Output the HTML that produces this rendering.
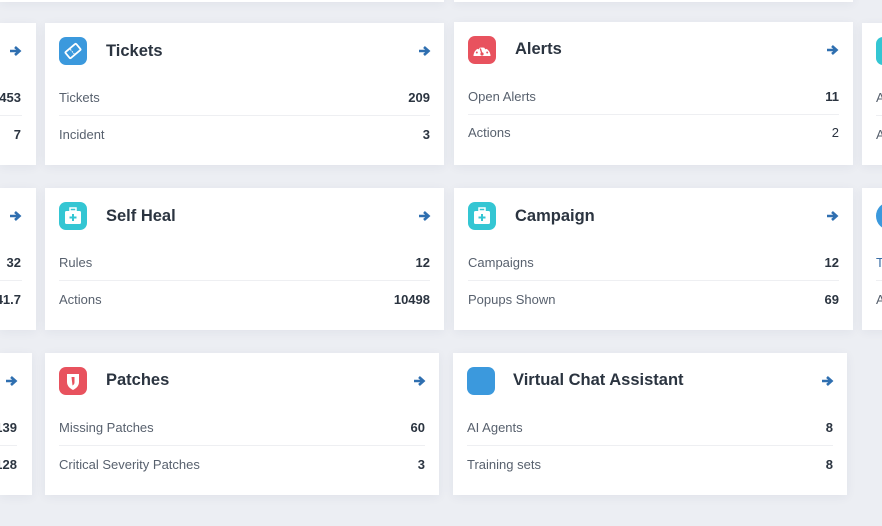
<!DOCTYPE html>
<html><head><style>
body{margin:0;width:882px;height:526px;background:#eceef3;position:relative;overflow:hidden;font-family:"Liberation Sans",sans-serif;}
.c{position:absolute;background:#fff;box-shadow:0 2px 10px rgba(40,50,80,.06);}
.ic{position:absolute;width:28px;height:28px;border-radius:7px;}
.t{position:absolute;font-size:16.5px;color:#2b3440;font-weight:600;}
.l{position:absolute;font-size:13px;color:#58616e;}
.v{position:absolute;font-size:13px;color:#2b3440;text-align:right;font-weight:600;}
.d{position:absolute;height:1px;background:#eeeff2;}
</style></head><body>
<div class="c" style="left:0;top:-10px;width:444px;height:12px"></div>
<div class="c" style="left:454px;top:-10px;width:399px;height:12px"></div>

<div class="c" style="left:0;top:23px;width:36px;height:142px">
<svg style="position:absolute;left:9px;top:22px" width="13" height="12" viewBox="0 0 13 12"><path d="M1 6H10M6 2L10.5 6L6 10" stroke="#2f6fb0" stroke-width="2.6" fill="none"/></svg>
<div class="v" style="right:15px;top:67px">453</div><div class="d" style="left:0;width:22px;top:92px"></div><div class="v" style="right:15px;top:104px">7</div></div>
<div class="c" style="left:0;top:188px;width:36px;height:142px">
<svg style="position:absolute;left:9px;top:22px" width="13" height="12" viewBox="0 0 13 12"><path d="M1 6H10M6 2L10.5 6L6 10" stroke="#2f6fb0" stroke-width="2.6" fill="none"/></svg>
<div class="v" style="right:15px;top:67px">32</div><div class="d" style="left:0;width:22px;top:92px"></div><div class="v" style="right:15px;top:104px">41.7</div></div>
<div class="c" style="left:0;top:353px;width:32px;height:142px">
<svg style="position:absolute;left:5px;top:22px" width="13" height="12" viewBox="0 0 13 12"><path d="M1 6H10M6 2L10.5 6L6 10" stroke="#2f6fb0" stroke-width="2.6" fill="none"/></svg>
<div class="v" style="right:15px;top:67px">139</div><div class="d" style="left:0;width:17px;top:92px"></div><div class="v" style="right:15px;top:104px">128</div></div>

<div class="c" style="left:862px;top:23px;width:30px;height:142px">
<div class="ic" style="left:14px;top:14px;background:#34c6d3"></div>
<div class="l" style="left:14px;top:67px">A</div><div class="d" style="left:14px;width:20px;top:92px"></div><div class="l" style="left:14px;top:104px">A</div></div>
<div class="c" style="left:862px;top:188px;width:30px;height:142px">
<div class="ic" style="left:14px;top:14px;background:#3b99dd;border-radius:14px"></div>
<div class="l" style="left:14px;top:67px;color:#3b6fa6">T</div><div class="d" style="left:14px;width:20px;top:92px"></div><div class="l" style="left:14px;top:104px">A</div></div>

<div class="c" style="left:45px;top:23px;width:399px;height:142px">
<div class="ic" style="left:14px;top:14px;background:#3b99dd"><svg width="28" height="28" viewBox="0 0 28 28"><g transform="rotate(-40 14 14)"><rect x="7" y="10" width="14" height="8" rx="1" fill="none" stroke="#fff" stroke-width="1.8"/><line x1="13" y1="11" x2="13" y2="17" stroke="#fff" stroke-width="1" stroke-dasharray="1.5 1"/></g></svg></div>
<div class="t" style="left:61px;top:19px">Tickets</div>
<svg style="position:absolute;left:373px;top:22px" width="13" height="12" viewBox="0 0 13 12"><path d="M1 6H10M6 2L10.5 6L6 10" stroke="#2f6fb0" stroke-width="2.6" fill="none"/></svg>
<div class="l" style="left:14px;top:67px">Tickets</div><div class="v" style="right:14px;top:67px">209</div>
<div class="d" style="left:14px;right:14px;top:92px"></div>
<div class="l" style="left:14px;top:104px">Incident</div><div class="v" style="right:14px;top:104px">3</div></div>

<div class="c" style="left:454px;top:22px;width:399px;height:143px">
<div class="ic" style="left:14px;top:14px;background:#e8525e"><svg width="28" height="28" viewBox="0 0 28 28"><path d="M5.5 20A8.5 8.5 0 1 1 22.5 20Z" fill="#fff"/><circle cx="14" cy="18" r="1.6" fill="#e8525e"/><path d="M14 18L12.3 12.5" stroke="#e8525e" stroke-width="1.3"/><circle cx="8.8" cy="16.5" r="1" fill="#e8525e"/><circle cx="19.2" cy="16.5" r="1" fill="#e8525e"/><circle cx="10.3" cy="12.3" r="1" fill="#e8525e"/><circle cx="17.7" cy="12.3" r="1" fill="#e8525e"/><circle cx="14" cy="10.5" r="1" fill="#e8525e"/></svg></div>
<div class="t" style="left:61px;top:18px">Alerts</div>
<svg style="position:absolute;left:372px;top:22px" width="13" height="12" viewBox="0 0 13 12"><path d="M1 6H10M6 2L10.5 6L6 10" stroke="#2f6fb0" stroke-width="2.6" fill="none"/></svg>
<div class="l" style="left:14px;top:67px">Open Alerts</div><div class="v" style="right:14px;top:67px">11</div>
<div class="d" style="left:14px;right:14px;top:92px"></div>
<div class="l" style="left:14px;top:103px">Actions</div><div class="v" style="right:14px;top:103px;font-weight:normal">2</div></div>

<div class="c" style="left:45px;top:188px;width:399px;height:142px">
<div class="ic" style="left:14px;top:14px;background:#34c6d3"><svg width="28" height="28" viewBox="0 0 28 28"><rect x="11" y="6" width="6" height="3" fill="none" stroke="#fff" stroke-width="1.5"/><rect x="6" y="9" width="16" height="13" rx="1.5" fill="#fff"/><path d="M14 12V19M10.5 15.5H17.5" stroke="#34c6d3" stroke-width="2"/></svg></div>
<div class="t" style="left:61px;top:19px">Self Heal</div>
<svg style="position:absolute;left:373px;top:22px" width="13" height="12" viewBox="0 0 13 12"><path d="M1 6H10M6 2L10.5 6L6 10" stroke="#2f6fb0" stroke-width="2.6" fill="none"/></svg>
<div class="l" style="left:14px;top:67px">Rules</div><div class="v" style="right:14px;top:67px">12</div>
<div class="d" style="left:14px;right:14px;top:92px"></div>
<div class="l" style="left:14px;top:104px">Actions</div><div class="v" style="right:14px;top:104px">10498</div></div>

<div class="c" style="left:454px;top:188px;width:399px;height:142px">
<div class="ic" style="left:14px;top:14px;background:#34c6d3"><svg width="28" height="28" viewBox="0 0 28 28"><rect x="11" y="6" width="6" height="3" fill="none" stroke="#fff" stroke-width="1.5"/><rect x="6" y="9" width="16" height="13" rx="1.5" fill="#fff"/><path d="M14 12V19M10.5 15.5H17.5" stroke="#34c6d3" stroke-width="2"/></svg></div>
<div class="t" style="left:61px;top:19px">Campaign</div>
<svg style="position:absolute;left:372px;top:22px" width="13" height="12" viewBox="0 0 13 12"><path d="M1 6H10M6 2L10.5 6L6 10" stroke="#2f6fb0" stroke-width="2.6" fill="none"/></svg>
<div class="l" style="left:14px;top:67px">Campaigns</div><div class="v" style="right:14px;top:67px">12</div>
<div class="d" style="left:14px;right:14px;top:92px"></div>
<div class="l" style="left:14px;top:104px">Popups Shown</div><div class="v" style="right:14px;top:104px">69</div></div>

<div class="c" style="left:45px;top:353px;width:394px;height:142px">
<div class="ic" style="left:14px;top:14px;background:#e8525e"><svg width="28" height="28" viewBox="0 0 28 28"><path d="M8 7H20V15C20 19 17 21.5 14 23C11 21.5 8 19 8 15Z" fill="#fff"/><path d="M12.5 10H15.5V15.5C15.5 17 14.5 18 13.5 18.5Z" fill="#e8525e"/></svg></div>
<div class="t" style="left:61px;top:18px">Patches</div>
<svg style="position:absolute;left:368px;top:22px" width="13" height="12" viewBox="0 0 13 12"><path d="M1 6H10M6 2L10.5 6L6 10" stroke="#2f6fb0" stroke-width="2.6" fill="none"/></svg>
<div class="l" style="left:14px;top:67px">Missing Patches</div><div class="v" style="right:14px;top:67px">60</div>
<div class="d" style="left:14px;right:14px;top:92px"></div>
<div class="l" style="left:14px;top:104px">Critical Severity Patches</div><div class="v" style="right:14px;top:104px">3</div></div>

<div class="c" style="left:453px;top:353px;width:394px;height:142px">
<div class="ic" style="left:14px;top:14px;background:#3b99dd"></div>
<div class="t" style="left:60px;top:18px">Virtual Chat Assistant</div>
<svg style="position:absolute;left:368px;top:22px" width="13" height="12" viewBox="0 0 13 12"><path d="M1 6H10M6 2L10.5 6L6 10" stroke="#2f6fb0" stroke-width="2.6" fill="none"/></svg>
<div class="l" style="left:14px;top:67px">AI Agents</div><div class="v" style="right:14px;top:67px">8</div>
<div class="d" style="left:14px;right:14px;top:92px"></div>
<div class="l" style="left:14px;top:104px">Training sets</div><div class="v" style="right:14px;top:104px">8</div></div>
</body></html>
